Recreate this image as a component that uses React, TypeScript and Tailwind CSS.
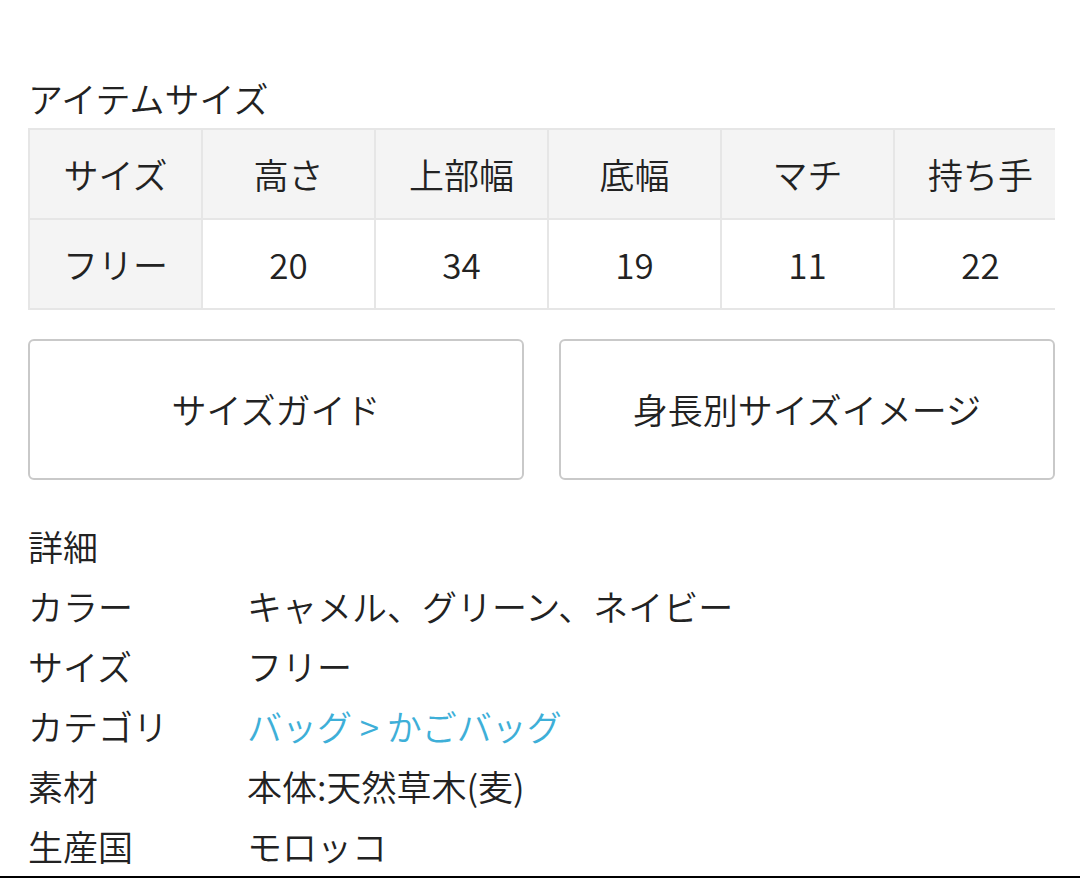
const HEAD = ["サイズ", "高さ", "上部幅", "底幅", "マチ", "持ち手"];
const ROW = ["フリー", "20", "34", "19", "11", "22"];

const DETAILS: { label: string; value: string; link?: boolean }[] = [
  { label: "カラー", value: "キャメル、グリーン、ネイビー" },
  { label: "サイズ", value: "フリー" },
  { label: "カテゴリ", value: "バッグ > かごバッグ", link: true },
  { label: "素材", value: "本体:天然草木(麦)" },
  { label: "生産国", value: "モロッコ" },
];

function SizeTable() {
  return (
    <div className="w-[1027px] overflow-hidden">
      <div className="grid w-[1038px] grid-cols-[repeat(6,173px)] border-l-2 border-t-2 border-[#e6e6e6]">
        {HEAD.map((h) => (
          <div
            key={h}
            className="flex h-[90px] items-center justify-center border-b-2 border-r-2 border-[#e6e6e6] bg-[#f4f4f4]"
          >
            {h}
          </div>
        ))}
        {ROW.map((v, i) => (
          <div
            key={i}
            className={
              i === 0
                ? "flex h-[90px] items-center justify-center border-b-2 border-r-2 border-[#e6e6e6] bg-[#f4f4f4]"
                : "flex h-[90px] items-center justify-center border-b-2 border-r-2 border-[#e6e6e6] bg-white"
            }
          >
            {v}
          </div>
        ))}
      </div>
    </div>
  );
}

export default function App() {
  return (
    <div className="h-[878px] w-[1080px] overflow-hidden bg-white font-['Noto_Sans_CJK_JP','Noto_Sans',sans-serif] text-[35px] font-[350] text-[#222]">
      <div className="pl-[28px] pr-[25px] pt-[76px]">
        <h2 className="text-[35px] font-[350] leading-[44px]">アイテムサイズ</h2>
        <div className="mt-[8px]">
          <SizeTable />
        </div>

        <div className="mt-[29px] flex gap-[35px]">
          <button className="flex h-[141px] w-[496px] items-center justify-center rounded-[6px] border-2 border-[#c9c9c9] bg-white">
            サイズガイド
          </button>
          <button className="flex h-[141px] w-[496px] items-center justify-center rounded-[6px] border-2 border-[#c9c9c9] bg-white">
            身長別サイズイメージ
          </button>
        </div>

        <div className="mt-[36px]">
          <div className="flex h-[60px] items-center">詳細</div>
          {DETAILS.map((d) => (
            <div key={d.label} className="flex h-[60px] items-center">
              <div className="w-[219px] shrink-0">{d.label}</div>
              <div className={d.link ? "text-[#3eafd8]" : ""}>{d.value}</div>
            </div>
          ))}
        </div>
      </div>
      <div className="h-[2px] w-full bg-black" />
    </div>
  );
}
